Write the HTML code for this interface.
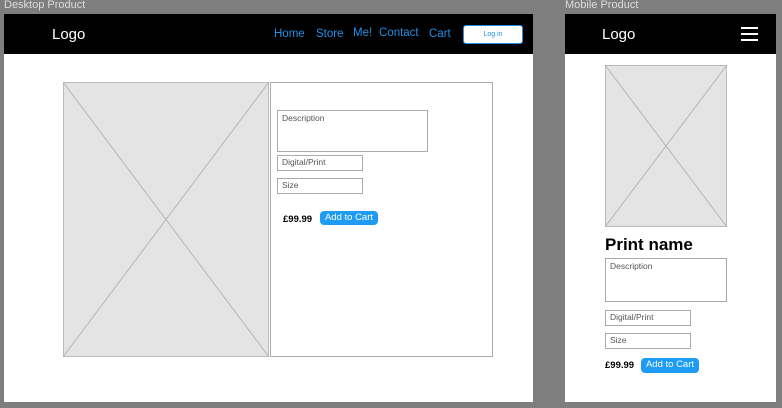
<!DOCTYPE html>
<html><head><meta charset="utf-8"><style>
*{margin:0;padding:0;box-sizing:border-box}
body{width:782px;height:408px;background:#7f7e7f;position:relative;overflow:hidden;font-family:"Liberation Sans",sans-serif}
.a{position:absolute}
.lbl{color:#dcdcdc;font-size:11px;top:-1px}
.frame{background:#fff}
.hdr{background:#000}
.logo{color:#fff;font-size:15px}
.nav{color:#1f8fe6;font-size:11.5px;top:28px}
.box{border:1px solid #aaa;background:#fff;font-size:8.5px;color:#555;padding:2px 4px}
.btn{background:#1e9bf5;color:#fff;font-size:9.5px;border-radius:4px;text-align:center;line-height:14px}
.price{font-weight:bold;font-size:9.5px;color:#000}
</style></head><body>
<div class="a lbl" style="left:4px">Desktop Product</div>
<div class="a lbl" style="left:565px">Mobile Product</div>

<div class="a frame" style="left:4px;top:14px;width:529px;height:388px"></div>
<div class="a hdr" style="left:4px;top:14px;width:529px;height:40px"></div>
<div class="a logo" style="left:52px;top:26px">Logo</div>
<div class="a nav" style="left:274px">Home</div>
<div class="a nav" style="left:316px">Store</div>
<div class="a nav" style="left:353px;top:27px">Me!</div>
<div class="a nav" style="left:379px;top:27px">Contact</div>
<div class="a nav" style="left:429px">Cart</div>
<div class="a" style="left:463px;top:25px;width:60px;height:19px;background:#fff;border:1px solid #1f8fe6;border-radius:3px;color:#1f8fe6;font-size:7px;text-align:center;line-height:17px">Log in</div>

<svg class="a" style="left:63px;top:82px" width="206" height="275"><rect x="0.5" y="0.5" width="205" height="274" fill="#e4e4e4" stroke="#bbb"/><line x1="0" y1="0" x2="206" y2="275" stroke="#aaa" stroke-width="0.8"/><line x1="206" y1="0" x2="0" y2="275" stroke="#aaa" stroke-width="0.8"/></svg>
<div class="a" style="left:270px;top:82px;width:223px;height:275px;border:1px solid #aaa;background:#fff"></div>
<div class="a box" style="left:277px;top:110px;width:151px;height:42px">Description</div>
<div class="a box" style="left:277px;top:155px;width:86px;height:16px;padding-top:1px">Digital/Print</div>
<div class="a box" style="left:277px;top:178px;width:86px;height:16px;padding-top:1px">Size</div>
<div class="a price" style="left:283px;top:214px">£99.99</div>
<div class="a btn" style="left:320px;top:211px;width:58px;height:14px">Add to Cart</div>

<div class="a frame" style="left:565px;top:14px;width:211px;height:388px"></div>
<div class="a hdr" style="left:565px;top:14px;width:211px;height:40px"></div>
<div class="a logo" style="left:602px;top:26px">Logo</div>
<div class="a" style="left:741px;top:27px;width:17px;height:2px;background:#fff"></div>
<div class="a" style="left:741px;top:33px;width:17px;height:2px;background:#fff"></div>
<div class="a" style="left:741px;top:39px;width:17px;height:2px;background:#fff"></div>
<svg class="a" style="left:605px;top:65px" width="122" height="162"><rect x="0.5" y="0.5" width="121" height="161" fill="#e4e4e4" stroke="#bbb"/><line x1="0" y1="0" x2="122" y2="162" stroke="#aaa" stroke-width="0.8"/><line x1="122" y1="0" x2="0" y2="162" stroke="#aaa" stroke-width="0.8"/></svg>
<div class="a" style="left:605px;top:235px;font-size:17px;font-weight:bold;color:#000">Print name</div>
<div class="a box" style="left:605px;top:258px;width:122px;height:44px">Description</div>
<div class="a box" style="left:605px;top:310px;width:86px;height:16px;padding-top:1px">Digital/Print</div>
<div class="a box" style="left:605px;top:333px;width:86px;height:16px;padding-top:1px">Size</div>
<div class="a price" style="left:605px;top:360px">£99.99</div>
<div class="a btn" style="left:641px;top:358px;width:58px;height:15px">Add to Cart</div>
</body></html>
